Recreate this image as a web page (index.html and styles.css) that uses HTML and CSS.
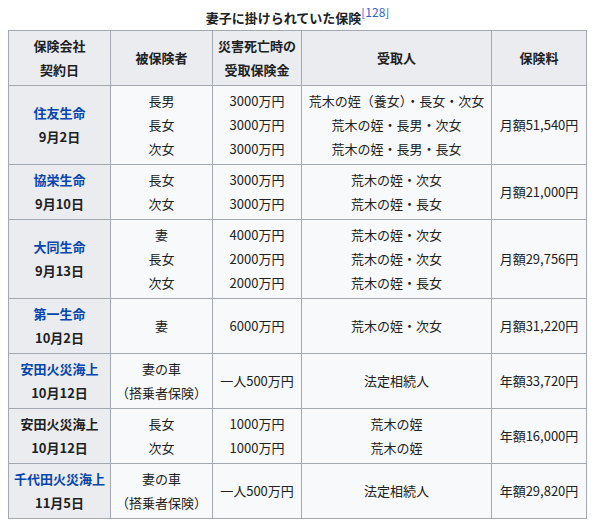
FILE: index.html
```html
<!DOCTYPE html>
<html lang="ja">
<head>
<meta charset="utf-8">
<link rel="stylesheet" href="styles.css">
</head>
<body>
<table class="wikitable">
<caption>妻子に掛けられていた保険<sup class="ref"><a href="#">[128]</a></sup></caption>
<colgroup>
<col class="c1"><col class="c2"><col class="c3"><col class="c4"><col class="c5">
</colgroup>
<thead>
<tr><th>保険会社<br>契約日</th><th>被保険者</th><th>災害死亡時の<br>受取保険金</th><th>受取人</th><th>保険料</th></tr>
</thead>
<tbody>
<tr><th><a href="#">住友生命</a><br>9月2日</th><td>長男<br>長女<br>次女</td><td>3000万円<br>3000万円<br>3000万円</td><td>荒木の姪（養女）・長女・次女<br>荒木の姪・長男・次女<br>荒木の姪・長男・長女</td><td>月額51,540円</td></tr>
<tr><th><a href="#">協栄生命</a><br>9月10日</th><td>長女<br>次女</td><td>3000万円<br>3000万円</td><td>荒木の姪・次女<br>荒木の姪・長女</td><td>月額21,000円</td></tr>
<tr><th><a href="#">大同生命</a><br>9月13日</th><td>妻<br>長女<br>次女</td><td>4000万円<br>2000万円<br>2000万円</td><td>荒木の姪・次女<br>荒木の姪・次女<br>荒木の姪・長女</td><td>月額29,756円</td></tr>
<tr><th><a href="#">第一生命</a><br>10月2日</th><td>妻</td><td>6000万円</td><td>荒木の姪・次女</td><td>月額31,220円</td></tr>
<tr><th><a href="#">安田火災海上</a><br>10月12日</th><td>妻の車<br>（搭乗者保険）</td><td>一人500万円</td><td>法定相続人</td><td>年額33,720円</td></tr>
<tr><th>安田火災海上<br>10月12日</th><td>長女<br>次女</td><td>1000万円<br>1000万円</td><td>荒木の姪<br>荒木の姪</td><td>年額16,000円</td></tr>
<tr><th><a href="#">千代田火災海上</a><br>11月5日</th><td>妻の車<br>（搭乗者保険）</td><td>一人500万円</td><td>法定相続人</td><td>年額29,820円</td></tr>
</tbody>
</table>
</body>
</html>
```
FILE: styles.css
```css
html, body {
  background: #ffffff;
}
body {
  margin: 8px;
  font-family: "Noto Sans CJK JP", "Noto Sans", sans-serif;
  font-size: 13px;
  color: #202122;
}
.wikitable {
  border-collapse: collapse;
  table-layout: fixed;
  width: 579px;
  background: #f8f9fa;
  border: 1px solid #a2a9b1;
  line-height: 24px;
}
.wikitable caption {
  font-weight: bold;
  text-align: center;
  line-height: 20px;
  height: 22px;
  padding: 0;
  box-sizing: border-box;
}
.ref {
  font-weight: normal;
  font-size: 12px;
  line-height: 0;
  vertical-align: 6px;
}
.ref a {
  color: #3366cc;
  text-decoration: none;
}
.c1 { width: 102px; }
.c2 { width: 102px; }
.c3 { width: 89px; }
.c4 { width: 190px; }
.c5 { width: 95px; }
.wikitable th,
.wikitable td {
  border: 1px solid #a2a9b1;
  padding: 3px 5px;
  text-align: center;
  vertical-align: middle;
}
.wikitable tr {
  height: 55px;
}
.wikitable th {
  background: #eaecf0;
  font-weight: bold;
}
.wikitable th a {
  color: #0645ad;
  text-decoration: none;
}
```
